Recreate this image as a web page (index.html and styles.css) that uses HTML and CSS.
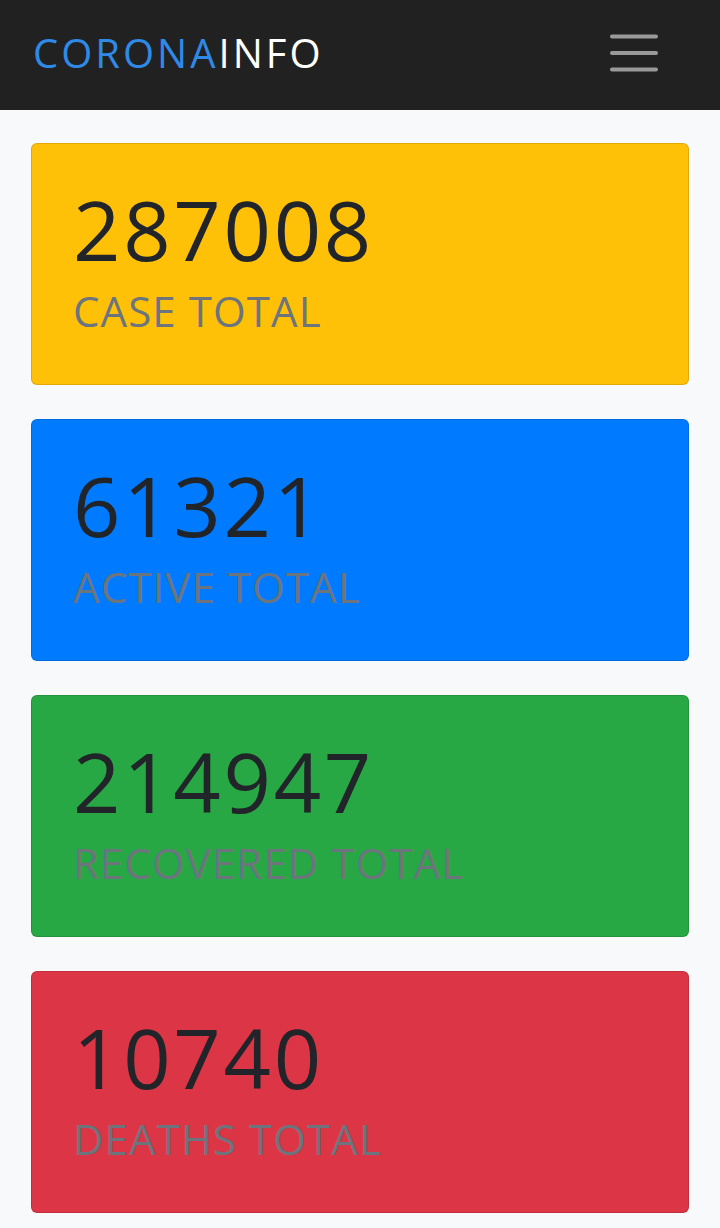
FILE: index.html
```html
<!DOCTYPE html>
<html>
<head>
<meta charset="utf-8">
<link rel="stylesheet" href="styles.css">
</head>
<body>
<nav class="navbar">
  <a class="brand"><span class="brand-blue">CORONA</span><span class="brand-white">INFO</span></a>
  <button class="toggler" aria-label="menu">
    <svg width="48" height="38" viewBox="0 0 48 38"><g stroke="#999" stroke-width="4" stroke-linecap="round"><line x1="2" y1="2.5" x2="46" y2="2.5"/><line x1="2" y1="19" x2="46" y2="19"/><line x1="2" y1="35.5" x2="46" y2="35.5"/></g></svg>
  </button>
</nav>
<main class="content">
  <div class="card card-yellow"><div class="num">287008</div><div class="label">CASE TOTAL</div></div>
  <div class="card card-blue"><div class="num">61321</div><div class="label">ACTIVE TOTAL</div></div>
  <div class="card card-green"><div class="num">214947</div><div class="label">RECOVERED TOTAL</div></div>
  <div class="card card-red"><div class="num">10740</div><div class="label">DEATHS TOTAL</div></div>
</main>
</body>
</html>
```
FILE: styles.css
```css
html, body { margin: 0; padding: 0; }
body {
  background: #f8f9fa;
  font-family: "Open Sans", "DejaVu Sans", sans-serif;
  color: #212529;
}
.navbar {
  height: 110px;
  background: #212121;
  display: flex;
  align-items: center;
  justify-content: space-between;
  padding: 0 62px 0 33px;
  box-sizing: border-box;
}
.brand {
  font-size: 40px;
  letter-spacing: 3px;
  line-height: 1;
  margin-bottom: 5px;
}
.brand-blue { color: #2e8ae6; }
.brand-white { color: #ffffff; }
.toggler {
  background: none;
  border: 0;
  padding: 0;
  display: flex;
  margin-bottom: 4px;
}
.content {
  display: flex;
  flex-direction: column;
  gap: 34px;
  padding: 33px 31px 0 31px;
}
.card {
  border: 1px solid rgba(0,0,0,0.125);
  border-radius: 6px;
  height: 242px;
  box-sizing: border-box;
  padding: 43px 41px 0 41px;
}
.card-yellow { background: #ffc107; }
.card-blue { background: #007bff; }
.card-green { background: #28a745; }
.card-red { background: #dc3545; }
.num {
  font-size: 83px;
  line-height: 84px;
  font-weight: 500;
  letter-spacing: 2.7px;
}
.label {
  font-size: 42px;
  line-height: 42px;
  margin-top: 19px;
  color: #6c757d;
  letter-spacing: 1.1px;
}
```
